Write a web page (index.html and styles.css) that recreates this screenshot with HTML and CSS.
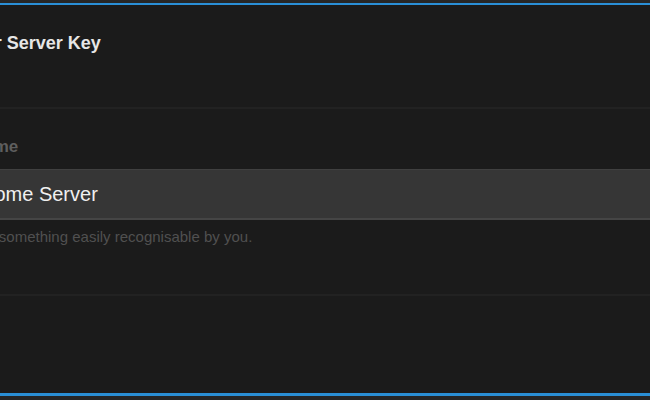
FILE: index.html
```html
<!DOCTYPE html>
<html lang="en">
<head>
    <meta charset="UTF-8">
    <meta name="viewport" content="width=device-width, initial-scale=1.0">
    <title>Server Key</title>
    <link rel="stylesheet" href="styles.css">
</head>
<body>
    <div class="dialog">
        <div class="dialog-inner">
            <div class="dialog-header">
                <h2 class="dialog-title">Your Server Key</h2>
            </div>
            <div class="dialog-body">
                <label class="field-label" for="serverName">Name</label>
                <input type="text" id="serverName" class="field-input" value="Home Server" />
                <p class="field-hint">Use something easily recognisable by you.</p>
            </div>
            <div class="dialog-footer"></div>
        </div>
    </div>
</body>
</html>
```

FILE: styles.css
```css
body {
    margin: 0;
    padding: 0;
    height: 100vh;
    background-color: #262626;
    font-family: "Liberation Sans", Arial, sans-serif;
    overflow: hidden;
}
.dialog {
    box-sizing: border-box;
    height: 100%;
    padding-top: 3px;
    padding-bottom: 4px;
}
.dialog-inner {
    box-sizing: border-box;
    height: 100%;
    background-color: #1b1b1b;
    border-top: 2px solid #2a8fd6;
    border-bottom: 3px solid #2a8fd6;
    margin-left: -38px;
    display: flex;
    flex-direction: column;
}
.dialog-header {
    height: 104px;
    border-bottom: 2px solid #222222;
    box-sizing: border-box;
    padding-top: 26px;
}
.dialog-title {
    margin: 0;
    font-size: 18px;
    font-weight: bold;
    color: #e6e6e6;
    line-height: 24px;
}
.dialog-body {
    height: 187px;
    box-sizing: border-box;
    border-bottom: 2px solid #222222;
    padding-top: 27px;
}
.field-label {
    display: block;
    padding-left: 10px;
    font-size: 17px;
    font-weight: bold;
    color: #5e5e5e;
    line-height: 22px;
    margin-bottom: 11px;
}
.field-input {
    display: block;
    box-sizing: border-box;
    width: calc(100% + 40px);
    height: 51px;
    margin: 0;
    padding: 0 18px;
    border: none;
    border-top: 1px solid #404040;
    border-bottom: 2px solid #454545;
    background-color: #363636;
    color: #f0f0f0;
    font-family: "Liberation Sans", Arial, sans-serif;
    font-size: 20px;
    outline: none;
}
.field-hint {
    margin: 8px 0 0 6px;
    font-size: 15px;
    color: #505050;
}
.dialog-footer {
    flex: 1;
}
```
